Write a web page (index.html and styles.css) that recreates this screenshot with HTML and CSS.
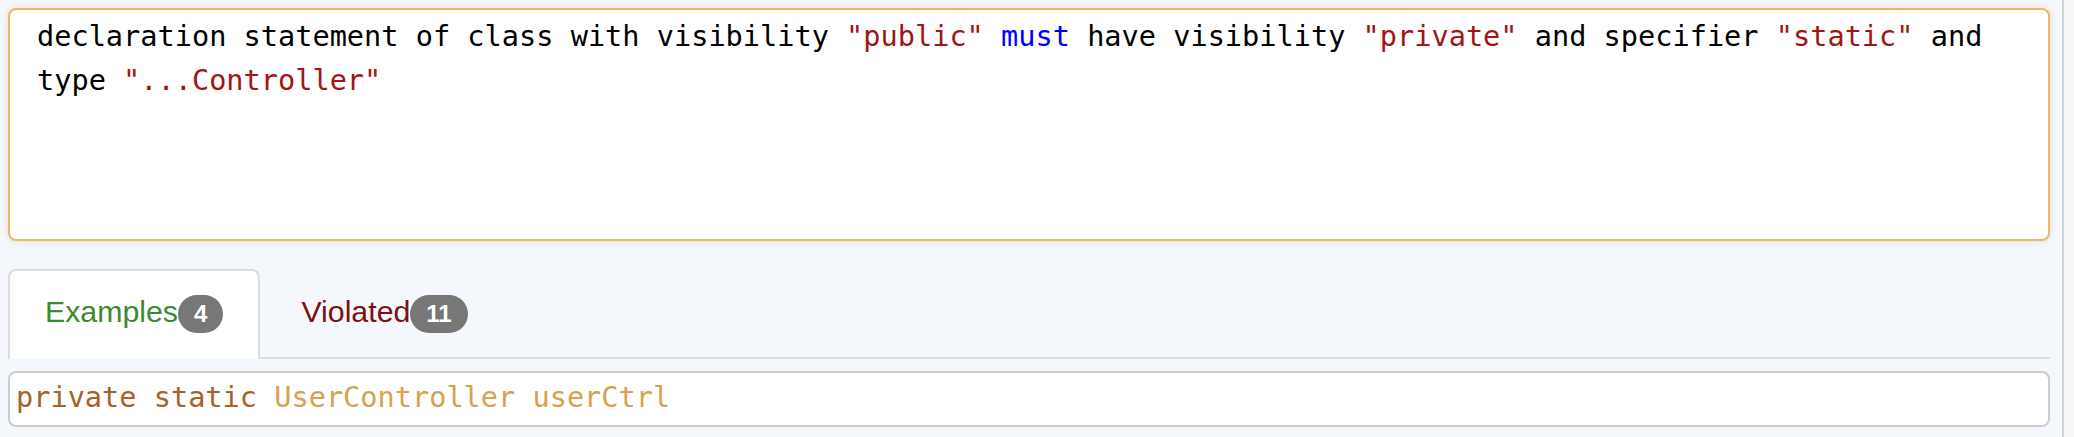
FILE: index.html
```html
<!DOCTYPE html>
<html lang="en">
<head>
<meta charset="utf-8">
<title>Rule</title>
<link rel="stylesheet" href="styles.css">
</head>
<body>
<div class="page">
  <div class="rule-box">declaration statement of class with visibility <span class="str">"public"</span> <span class="kw">must</span> have visibility <span class="str">"private"</span> and specifier <span class="str">"static"</span> and type <span class="str">"...Controller"</span></div>
  <ul class="tabs">
    <li class="tab active"><a class="tab-link ok">Examples<span class="badge">4</span></a></li>
    <li class="tab"><a class="tab-link bad">Violated<span class="badge">11</span></a></li>
  </ul>
  <div class="code-box"><span class="c-mod">private static</span> <span class="c-id">UserController userCtrl</span></div>
</div>
</body>
</html>
```

FILE: styles.css
```css
html, body {
  margin: 0;
  padding: 0;
}
body {
  background: #f7f7f7;
  height: 437px;
  overflow: hidden;
}
.page {
  box-sizing: border-box;
  width: 2064px;
  height: 437px;
  padding: 8px 12px 0 8px;
  background: #f4f8fd;
  border-right: 2px solid #cfd2d6;
}
.rule-box {
  box-sizing: border-box;
  height: 233px;
  padding: 4px 26px 0 27px;
  background: #ffffff;
  border: 2px solid #e8b96c;
  border-radius: 8px;
  box-shadow: 0 0 7px rgba(232, 185, 108, 0.45);
  font-family: "DejaVu Sans Mono", monospace;
  font-size: 28.6px;
  line-height: 44px;
  color: #000000;
}
.str { color: #a31515; }
.kw { color: #0000ff; }

.tabs {
  list-style: none;
  margin: 28px 0 0 0;
  padding: 0;
  display: flex;
  border-bottom: 2px solid #dcdfe3;
}
.tab {
  margin: 0 4px -2px 0;
}
.tab-link {
  display: block;
  box-sizing: border-box;
  height: 90px;
  padding: 24px 35px 0 35px;
  border: 2px solid transparent;
  border-bottom: none;
  border-radius: 8px 8px 0 0;
  font-family: "Liberation Sans", Arial, sans-serif;
  font-size: 30.3px;
  line-height: 34px;
  white-space: nowrap;
}
.tab.active .tab-link {
  background: #ffffff;
  border-color: #dcdcdc;
}
.ok { color: #3c8a2f; }
.bad { color: #7b1111; }
.badge {
  display: inline-block;
  padding: 7px 16px;
  border-radius: 19px;
  background: #777777;
  color: #ffffff;
  font-family: "Liberation Sans", Arial, sans-serif;
  font-weight: bold;
  font-size: 24px;
  line-height: 24px;
  vertical-align: baseline;
}

.code-box {
  box-sizing: border-box;
  height: 56px;
  margin-top: 12px;
  padding: 0 6px;
  background: #ffffff;
  border: 2px solid #cbcccd;
  border-radius: 8px;
  font-family: "DejaVu Sans Mono", monospace;
  font-size: 28.6px;
  line-height: 48px;
  white-space: nowrap;
}
.c-mod { color: #a5622b; }
.c-id { color: #d6a24f; }
```
